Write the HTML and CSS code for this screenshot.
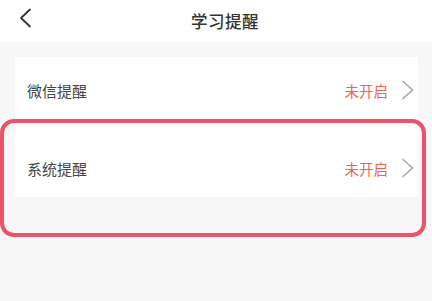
FILE: index.html
```html
<!DOCTYPE html>
<html lang="zh-CN">
<head>
<meta charset="utf-8">
<link rel="stylesheet" href="styles.css">
</head>
<body>
<header class="topbar">
  <span class="back">
    <svg width="14" height="20" viewBox="0 0 14 20"><path d="M12 1.5 L3 10 L12 18.5" fill="none" stroke="#333" stroke-width="1.8" stroke-linecap="round" stroke-linejoin="round"/></svg>
  </span>
  <h1 class="title">学习提醒</h1>
</header>
<main class="content">
  <section class="card">
    <div class="row row-first">
      <span class="label">微信提醒</span>
      <span class="status">未开启</span>
      <svg class="arrow" width="13" height="20" viewBox="0 0 13 20"><path d="M1.5 1 L11.5 10 L1.5 19" fill="none" stroke="#a3a3a3" stroke-width="1.5" stroke-linejoin="round"/></svg>
    </div>
    <div class="row row-second">
      <span class="label">系统提醒</span>
      <span class="status">未开启</span>
      <svg class="arrow" width="13" height="20" viewBox="0 0 13 20"><path d="M1.5 1 L11.5 10 L1.5 19" fill="none" stroke="#a3a3a3" stroke-width="1.5" stroke-linejoin="round"/></svg>
    </div>
  </section>
  <div class="highlight"></div>
</main>
</body>
</html>
```
FILE: styles.css
```css
* { box-sizing: border-box; }
html, body { margin: 0; padding: 0; }
body {
  width: 432px;
  height: 301px;
  background: #f7f7f7;
  font-family: "Noto Sans CJK SC", "Noto Sans", sans-serif;
  overflow: hidden;
}
.topbar {
  height: 42px;
  background: #ffffff;
  display: flex;
  align-items: center;
  justify-content: center;
  position: relative;
}
.back {
  position: absolute;
  left: 18px;
  top: 8px;
  display: flex;
}
.title {
  margin: 0 0 0 18px;
  font-size: 16.5px;
  font-weight: 500;
  color: #333333;
  letter-spacing: 0.5px;
}
.content {
  position: relative;
  padding-top: 15px;
  height: 259px;
}
.card {
  margin: 0 14px 0 15px;
  background: #ffffff;
  padding: 0 4px 0 12px;
}
.row {
  display: flex;
  align-items: center;
}
.row-first { height: 66px; }
.row-second { height: 74px; padding-top: 16px; }
.label {
  flex: 1;
  font-size: 15px;
  color: #454545;
}
.status {
  font-size: 14.5px;
  color: #e8664f;
  margin-right: 13px;
}
.arrow { display: block; }
.highlight {
  position: absolute;
  left: 0;
  top: 77px;
  width: 426px;
  height: 118px;
  border: 4px solid #ea5469;
  border-radius: 14px;
}
```
